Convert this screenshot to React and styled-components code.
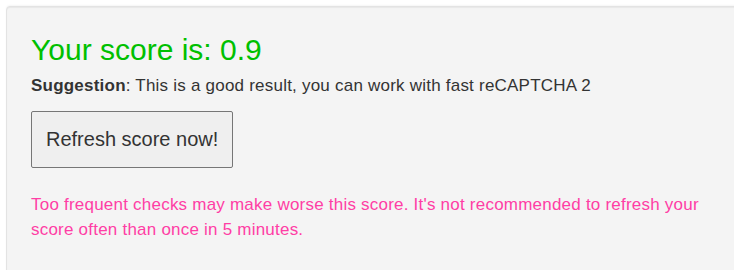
import React from "react";
import styled, { createGlobalStyle } from "styled-components";

const GlobalStyle = createGlobalStyle`
	html, body {
		margin: 0;
		padding: 0;
		background: #ffffff;
		overflow: hidden;
	}
	body {
		font-family: "Liberation Sans", Arial, sans-serif;
	}
`;

const Page = styled.div`
	padding: 6px 0 0 6px;
	height: 100vh;
	box-sizing: border-box;
	overflow: hidden;
`;

const Well = styled.div`
	margin-right: -20px;
	min-height: 300px;
	box-sizing: border-box;
	padding: 26px 24px;
	background-color: #f4f4f4;
	border: 1px solid #e3e3e3;
	border-radius: 4px;
	box-shadow: inset 0 1px 1px rgba(0, 0, 0, 0.05), 0 -1px 2px rgba(0, 0, 0, 0.04);
`;

const Score = styled.h3`
	margin: 0;
	font-size: 30px;
	font-weight: 400;
	line-height: 33px;
	color: #00c000;
`;

const Suggestion = styled.p`
	margin: 7px 0 0;
	font-size: 17px;
	letter-spacing: 0.22px;
	line-height: 25px;
	color: #333333;

	b {
		font-weight: 700;
	}
`;

const Button = styled.button`
	display: block;
	margin-top: 13px;
	padding: 13px 14px;
	font-family: "Liberation Sans", Arial, sans-serif;
	font-size: 20px;
	line-height: 29px;
	color: #333333;
	background-color: #efefef;
	border: 1px solid #767676;
	border-radius: 2px;
	cursor: pointer;
`;

const Warning = styled.p`
	margin: 24px 0 0;
	max-width: 690px;
	font-size: 17px;
	letter-spacing: 0.22px;
	line-height: 25px;
	color: #ff3ea5;
`;

const App = () => {
	return (
		<>
			<GlobalStyle />
			<Page>
				<Well>
					<Score>Your score is: 0.9</Score>
					<Suggestion>
						<b>Suggestion</b>: This is a good result, you can work with fast reCAPTCHA 2
					</Suggestion>
					<Button>Refresh score now!</Button>
					<Warning>
						Too frequent checks may make worse this score. It's not recommended to refresh your score often than once in 5 minutes.
					</Warning>
				</Well>
			</Page>
		</>
	);
};

export default App;
